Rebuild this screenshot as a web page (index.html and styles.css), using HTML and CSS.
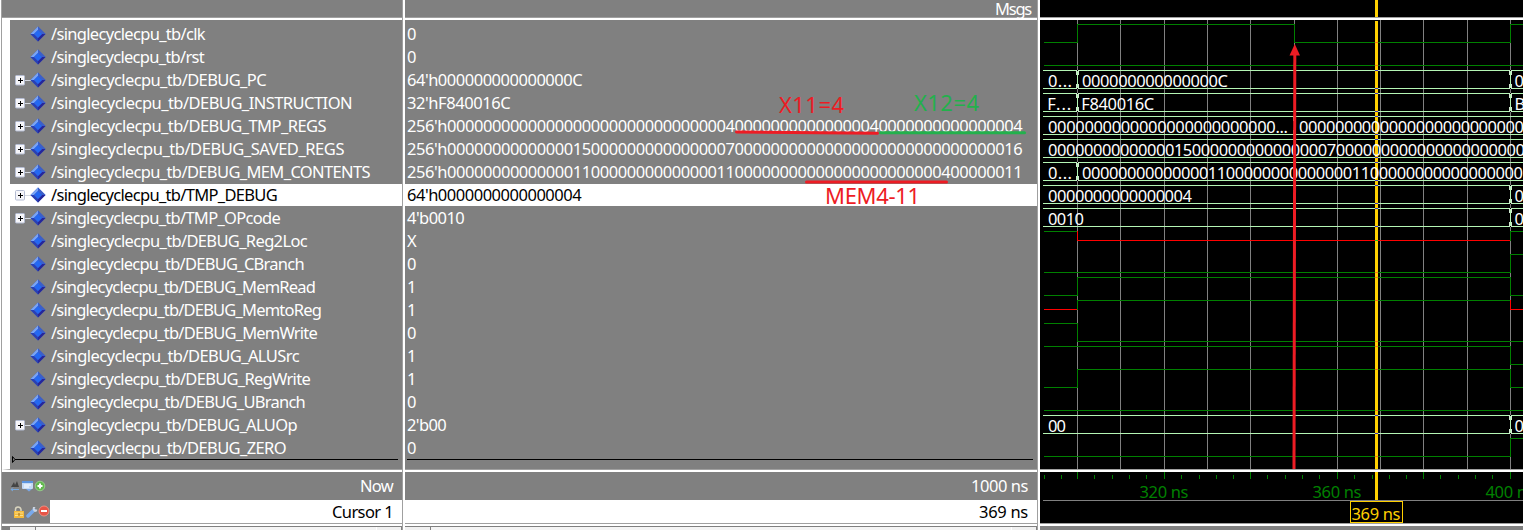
FILE: index.html
```html
<!DOCTYPE html>
<html lang="en">
<head>
<meta charset="utf-8">
<title>Wave</title>
<link rel="stylesheet" href="styles.css">
</head>
<body>
<svg class="defs" aria-hidden="true">
  <defs>
    <symbol id="gem" viewBox="0 0 16 16">
      <path d="M8 0.5L15.5 8 8 15.5 0.5 8z" fill="#2f55c8"/>
      <path d="M8 0.5L0.5 8H4L8 4z" fill="#7aa4f4"/>
      <path d="M8 0.5L15.5 8H12L8 4z" fill="#3c5fc9"/>
      <path d="M0.5 8L8 15.5V12L4 8z" fill="#2a40b4"/>
      <path d="M15.5 8L8 15.5V12L12 8z" fill="#26269a"/>
      <path d="M8 4L12 8 8 12 4 8z" fill="#2468f2"/>
    </symbol>
    <symbol id="plus" viewBox="0 0 16 11">
      <path d="M10 5.5H16" stroke="#d4d8e0"/>
      <rect x="0.5" y="0.5" width="9" height="9.5" rx="1" fill="#f6f6fa" stroke="#b4bcd2"/>
      <path d="M3 5.5H8M5.5 3V8" stroke="#000" fill="none"/>
    </symbol>
  </defs>
</svg>
<div class="window">
  <section class="pane names">
    <header class="head">
      <svg class="logo" width="28" height="16" viewBox="0 0 28 16">
        <path d="M1 5.500L6 1 9 3 4 7z" fill="#d63be8" stroke="#60106c"/>
        <path d="M9 5H15.500V13H7z" fill="#12b04a" stroke="#086028"/>
        <path d="M5.500 5.500L11 10.500 5.500 15.500 0.500 10.500z" fill="#0a55e8"/>
        <circle cx="9.500" cy="7" r="3.300" fill="#10e4f8"/>
        <path d="M20 9.500H26L23 12.500z" fill="#000"/>
      </svg>
    </header>
    <div class="rows" id="names"></div>
    <div class="foot now">
      <svg class="tools" width="36" height="14" viewBox="0 0 36 14">
        <path d="M1 8L4 3 5 6 7 2 9 8z" fill="#444"/>
        <path d="M1 10.500H9M3 8.500L1 10.500 3 12" stroke="#78a8dc" fill="none"/>
        <rect x="12" y="2" width="11" height="8" rx="1" fill="#c4daf6"/>
        <path d="M12 3H23" stroke="#5b95e0" stroke-width="2"/>
        <path d="M14 6H21M14 8H19" stroke="#fff"/>
        <path d="M16 10H22L19 12.500z" fill="#7aa8e8"/>
        <circle cx="30" cy="7" r="4.800" fill="#62b84e" stroke="#9ed494" stroke-width="0.800"/>
        <path d="M27.500 7H32.500M30 4.500V9.500" stroke="#fff" stroke-width="2"/>
      </svg>
      <span data-width="33">Now</span>
    </div>
    <div class="foot cursor">
      <svg class="tools2" width="40" height="23" viewBox="0 0 40 23">
        <path d="M5.500 12V9.500Q5.500 7 8 7T11 9.500V11" stroke="#d9d4be" stroke-width="1.500" fill="none"/>
        <rect x="4" y="11" width="10" height="7" fill="#f4b93c"/>
        <path d="M5 13H13M5 15.500H13" stroke="#fbe08a"/>
        <path d="M9 13V16" stroke="#a06a10"/>
        <path d="M18 16L24 10" stroke="#78a9ec" stroke-width="3.500" stroke-linecap="round"/>
        <path d="M23 7Q22 11 25 12 28 12 27 9L26 10 24.500 8.500 25.500 7z" fill="#cbd4e2"/>
        <circle cx="34" cy="11" r="5" fill="#e65446" stroke="#f39a8c" stroke-width="0.800"/>
        <path d="M31 11H37" stroke="#fff" stroke-width="2"/>
      </svg>
      <div class="field"><span data-width="61">Cursor 1</span></div>
    </div>
    <div class="scroll"><i></i><b></b><i></i></div>
  </section>
  <section class="pane values">
    <header class="head"><span data-width="36">Msgs</span></header>
    <div class="rows" id="values"></div>
    <div class="foot now"><span data-width="57">1000 ns</span></div>
    <div class="foot cursor"><div class="field"><span data-width="49">369 ns</span></div></div>
    <div class="scroll"><i></i><b></b><i></i></div>
  </section>
  <section class="pane wave">
    <svg id="wave" width="483" height="530" viewBox="1040 0 483 530"></svg>
  </section>
  <svg class="notes" width="1523" height="530" viewBox="0 0 1523 530">
    <g fill="none" stroke-width="3" stroke-linecap="round">
      <path d="M736.500 132L877.500 133.300" stroke="#ed1c24"/>
      <path d="M880.500 132.700H1024.500" stroke="#22b14c"/>
      <path d="M806.500 182H946.500" stroke="#ed1c24"/>
    </g>
    <path d="M1294.800 54L1294 469" stroke="#ed1c24" stroke-width="3"/>
    <path d="M1294.800 44L1300 55.500H1289.500z" fill="#ed1c24"/>
    <g class="note">
      <text x="779" y="113" textLength="65" fill="#ed1c24">X11=4</text>
      <text x="914" y="110.500" textLength="65" fill="#22b14c">X12=4</text>
      <text x="825" y="203.500" textLength="95" fill="#ed1c24">MEM4-11</text>
    </g>
  </svg>
</div>
<script src="wave.js"></script>
</body>
</html>
```
FILE: styles.css
```css
* { box-sizing: border-box; }
body {
  margin: 0;
  background: #fff;
  font: 16.5px/21px "Noto Sans", Tahoma, sans-serif;
  overflow: hidden;
}
.defs { position: absolute; width: 0; height: 0; }
.window {
  position: relative;
  display: grid;
  grid-template-columns: 401px 633px 483px;
  column-gap: 2px;
  width: 1523px;
  height: 530px;
  padding-left: 1px;
}
.pane { height: 530px; }
.names, .values {
  border-right: 1px solid #a0a0a0;
  display: flex;
  flex-direction: column;
  color: #fff;
  white-space: pre;
}
.names { border-left: 1px solid #a0a0a0; width: 402px; }
.values { margin-left: 1px; width: 633px; }
.wave { display: block; margin-left: 1px; }
.wave svg { display: block; }
.head {
  height: 18px;
  background: #808080;
  border-bottom: 1px solid #a0a0a0;
  margin-bottom: 2px;
  line-height: 18px;
  text-align: right;
  padding-right: 6px;
}
.head span { display: inline-block; }
.logo { display: block; margin: 1px 0 0 10px; }
.rows {
  height: 450px;
  background: #808080;
  border-bottom: 1px solid #a0a0a0;
  margin-bottom: 2px;
  padding-top: 3px;
}
.names .rows { border-left: 8px solid #fff; }
.row { display: flex; height: 23px; align-items: center; }
.row span { display: block; height: 23px; }
.values .row { padding-left: 2px; }
.names .row { padding-left: 5px; }
.row .box { width: 16px; height: 11px; flex: none; }
.row .gem { width: 16px; height: 16px; flex: none; margin: 0 5.5px 1px -1.5px; }
.row.selected { background: #fff; color: #000; height: 22px; margin-bottom: 1px; }
.row.selected span { height: 22px; line-height: 21px; }
.insert { display: block; margin-top: -5px; height: 8px; }
.foot { display: flex; align-items: center; justify-content: space-between; background: #808080; }
.foot span { margin-left: auto; }
.now { height: 28px; padding: 0 9px 1px 0; }
.now span { margin-top: -1px; }
.names .now { padding-left: 8px; }
.cursor { height: 24px; border-bottom: 1px solid #a0a0a0; color: #000; }
.field {
  display: flex;
  flex: 1;
  height: 23px;
  background: #fff;
  line-height: 23px;
  padding-right: 9px;
}
.tools2 { margin: 0 0 0 8px; }
.scroll {
  display: flex;
  margin-top: 2px;
  height: 4px;
  background: #f4f4f4;
  border-top: 1px solid #808080;
}
.names .scroll { border-left: 8px solid #808080; }
.scroll i { width: 26px; background: #f0f0f0; border-right: 1px solid #808080; }
.scroll i:last-child { border-left: 1px solid #fff; }
.scroll b { flex: 1; }
.notes { position: absolute; left: 0; top: 0; }
.note text { font-size: 22px; }
.label { fill: #fff; }
.time { fill: #008000; }
.time.now-time { fill: #ffd000; }
```
FILE: wave.js
```js
const P = '/singlecyclecpu_tb/';
// name, value, expandable, rendered name width
const signals = [
  ['clk', '0', 0, 154], ['rst', '0', 0, 153],
  ['DEBUG_PC', "64'h000000000000000C", 1, 215],
  ['DEBUG_INSTRUCTION', "32'hF840016C", 1, 301],
  ['DEBUG_TMP_REGS', "256'h" + '0'.repeat(31) + '4' + '0'.repeat(15) + '4' + '0'.repeat(15) + '4', 1, 275],
  ['DEBUG_SAVED_REGS', "256'h" + '0'.repeat(14) + '15' + '0'.repeat(15) + '7' + '0'.repeat(30) + '16', 1, 293],
  ['DEBUG_MEM_CONTENTS', "256'h" + '0'.repeat(14) + '11' + '0'.repeat(14) + '11' + '0'.repeat(23) + '4' + '0'.repeat(6) + '11', 1, 319],
  ['TMP_DEBUG', "64'h0000000000000004", 1, 226],
  ['TMP_OPcode', "4'b0010", 1, 229],
  ['DEBUG_Reg2Loc', 'X', 0, 256], ['DEBUG_CBranch', '0', 0, 253],
  ['DEBUG_MemRead', '1', 0, 264], ['DEBUG_MemtoReg', '1', 0, 270],
  ['DEBUG_MemWrite', '0', 0, 266], ['DEBUG_ALUSrc', '1', 0, 248],
  ['DEBUG_RegWrite', '1', 0, 259], ['DEBUG_UBranch', '0', 0, 254],
  ['DEBUG_ALUOp', "2'b00", 1, 246], ['DEBUG_ZERO', '0', 0, 235]
];
const cls = i => i === 7 ? 'row selected' : 'row';
const line = (w, x, tri) => `<svg class="insert" width="${w}" height="8"><path d="M${x} 4.5H${w - 4}" stroke="#000"/>${tri ? '<path d="M2.500 1.500V7.500L5 4.500z" fill="none" stroke="#000"/>' : ''}</svg>`;
document.getElementById('names').innerHTML = signals.map((s, i) =>
  `<div class="${cls(i)}"><svg class="box">${s[2] ? '<use href="#plus"/>' : ''}</svg><svg class="gem"><use href="#gem"/></svg><span>${P}${s[0]}</span></div>`).join('') + line(392, 5, true);
document.getElementById('values').innerHTML = signals.map((s, i) =>
  `<div class="${cls(i)}"><span>${s[1]}</span></div>`).join('') + line(632, 2, false);

// fit each text to its pitch through letter spacing
const fit = (el, width) => {
  const r = document.createRange();
  r.selectNodeContents(el);
  el.style.letterSpacing = '0px';
  const n = el.textContent.length;
  el.style.letterSpacing = (width - r.getBoundingClientRect().width) / n + 'px';
};
document.querySelectorAll('#names span').forEach((el, i) => fit(el, signals[i][3]));
const valueWidth = t => [...t].reduce((w, c) => w + (c === "'" ? 3.2 : c === 'C' ? 10 : 9), 0);
document.querySelectorAll('#values span').forEach(el => fit(el, valueWidth(el.textContent)));
document.querySelectorAll('[data-width]').forEach(el => fit(el, +el.dataset.width));

const out = [];
const rect = (x, y, w, h, f) => out.push(`<rect x="${x}" y="${y}" width="${w}" height="${h}" fill="${f}"/>`);
const text = (x, y, t, w, c = 'label') => out.push(`<text class="${c}" x="${x}" y="${y}" textLength="${w}">${t}</text>`);
const A = 1077, M = 1294, B = 1510, END = 1523, G = '#008000', R = '#ff0000', L = '#b4f5b4';
rect(1040, 0, 483, 530, '#000');
[A, 1120, 1164, 1207, 1250, M, 1337, 1380, 1423, 1467, B].forEach(x => rect(x, 20, 1, 449, '#808080'));

// levels: h high, l low, x unknown; one [start, level] pair for each segment
const off = { h: 24, x: 33, l: 42 };
const logic = (i, segs) => segs.forEach(([x, v], k) => {
  const y = off[v] + 23 * i, c = v === 'x' ? R : G;
  const end = segs[k + 1] ? segs[k + 1][0] : END;
  rect(x, y, end - x, 1, c);
  if (k) {
    const p = off[segs[k - 1][1]] + 23 * i;
    rect(x, Math.min(p, y), 1, Math.abs(p - y) + 1, c);
  }
});
const S = 1044;
logic(0, [[S, 'l'], [A, 'h'], [M, 'l'], [B, 'h']]);
logic(1, [[S, 'l']]);
logic(9, [[S, 'h'], [A, 'x'], [B, 'h']]);
logic(10, [[S, 'l'], [B, 'h']]);
logic(11, [[S, 'l'], [A, 'h'], [B, 'l']]);
logic(12, [[S, 'x'], [A, 'h'], [B, 'x']]);
logic(13, [[S, 'h'], [A, 'l']]);
logic(14, [[S, 'h'], [B, 'l']]);
logic(15, [[S, 'l'], [A, 'h'], [B, 'l']]);
logic(16, [[S, 'l']]);
logic(18, [[S, 'l'], [B, 'h']]);

rect(1375, 0, 3, 17, '#ffd000');
rect(1375, 21, 3, 448, '#ffd000');
[[0, 'l'], [1, 'l'], [10, 'l'], [11, 'h'], [12, 'h'], [13, 'l'], [14, 'h'], [15, 'h'], [16, 'l'], [18, 'l']]
  .forEach(([i, v]) => rect(1375, off[v] + 23 * i, 3, 1, '#ff6a20'));
rect(1375, 240, 3, 1, '#20c020');

const bus = (i, marks, labels) => {
  const y = 24 + 23 * i;
  [y, y + 18].forEach(v => { rect(1043, v, 480, 1, L); rect(1375, v, 3, 1, '#4030c0'); });
  marks.forEach(x => {
    rect(x - 1, y, 3, 5, '#d0e8d0');
    rect(x - 1, y + 14, 3, 5, '#d0e8d0');
    rect(x, y, 1, 19, L);
    rect(x, y, 1, 1, '#000');
    rect(x, y + 18, 1, 1, '#000');
  });
  labels.forEach(([x, t, w]) => text(x, y + 17, t, w || t.length * 9));
};
const z = n => '0'.repeat(n);
bus(2, [A, B], [[1048, '0...', 24], [1082, z(15) + 'C', 146], [1514.5, '0']]);
bus(3, [A, B], [[1047.3, 'F...', 24], [1081.3, 'F840016C', 73], [1514.5, 'B', 10]]);
bus(4, [M], [[1048, z(25) + '...', 240], [1299, z(25)]]);
bus(5, [], [[1048, z(14) + '15' + z(15) + '7' + z(21)]]);
bus(6, [A], [[1048, '0...', 24], [1082, z(14) + '11' + z(14) + '11' + z(17)]]);
bus(7, [B], [[1048, z(15) + '4'], [1514.5, '0']]);
bus(8, [B], [[1048, '0010'], [1514.5, '0']]);
bus(17, [B], [[1048, '00'], [1514.5, '0']]);

const divider = (y) => { rect(1040, y, 483, 1, '#a0a0a0'); rect(1040, y + 1, 483, 2, '#fff'); };
divider(17);
divider(469);
[1044, 1061, 1094, 1112, 1129, 1146, 1181, 1199, 1216, 1233, 1267, 1285, 1302, 1319, 1354, 1372, 1389, 1406, 1440, 1458, 1475, 1492]
  .forEach(x => rect(x, 475, 1, 4, G));
[A, 1164, 1250, 1337, 1423, B].forEach(x => rect(x, 472, 1, 7, G));
text(1139.5, 498, '320 ns', 49, 'time');
text(1312.5, 498, '360 ns', 49, 'time');
text(1485.5, 498, '400 ns', 49, 'time');
rect(1043, 500, 480, 1, '#808080');
rect(1375, 472, 3, 28, '#ffd000');
out.push('<rect x="1350.5" y="501.5" width="52" height="21" fill="#000" stroke="#ffd000"/>');
text(1351.5, 520, '369 ns', 49, 'time now-time');
divider(523);
rect(1040, 526, 483, 4, '#808080');
document.getElementById('wave').innerHTML = out.join('');
```
